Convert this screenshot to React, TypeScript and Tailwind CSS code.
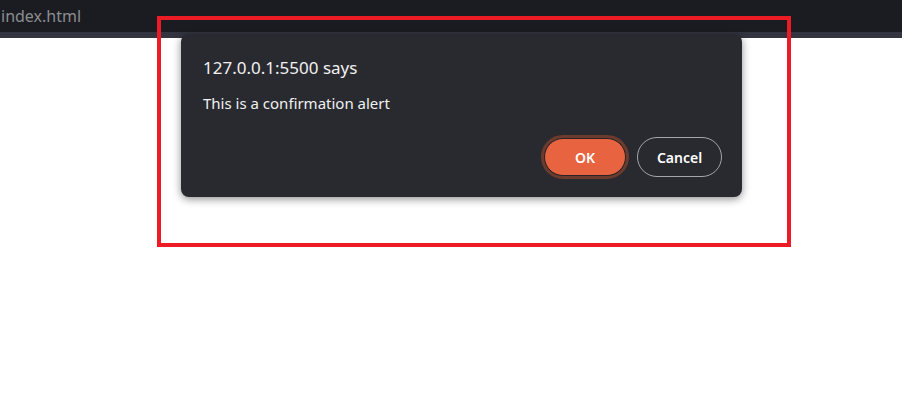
import React from "react";

export default function App() {
  return (
    <div
      className="relative w-[902px] h-[404px] bg-white overflow-hidden"
      style={{ fontFamily: '"Noto Sans", "Segoe UI", sans-serif' }}
    >
      <div className="h-[32px] bg-[#1b1c21] flex items-center">
        <span className="ml-[1px] text-[16px] text-[#8b8c90] leading-none pb-[1px]" style={{ fontFamily: '"Noto Sans", sans-serif' }}>
          index.html
        </span>
      </div>
      <div className="h-[6px] bg-[#32343f]" />

      {/* dialog */}
      <div className="absolute left-[181px] top-[34px] w-[561px] h-[163px] rounded-[8px] bg-[#292a2f] shadow-[0_2px_8px_rgba(0,0,0,0.45)] flex flex-col pl-[22px] pr-[20px] pt-[22px] pb-[20px]">
        <div className="text-[17px] leading-[24px] text-[#f1f1f1]">127.0.0.1:5500 says</div>
        <div className="mt-[12px] text-[15px] leading-[22px] text-[#f1f1f1]">This is a confirmation alert</div>
        <div className="mt-auto flex justify-end items-center gap-[11px]">
          <button className="h-[38px] w-[82px] rounded-full bg-[#e8633f] text-white text-[14px] font-semibold border border-[#2a2225] outline outline-[3px] outline-[#6b3b2e] outline-offset-0">
            OK
          </button>
          <button className="h-[40px] w-[85px] rounded-full bg-transparent text-white text-[14px] font-semibold border border-[#a5a6aa]">
            Cancel
          </button>
        </div>
      </div>

      {/* red annotation box */}
      <div className="absolute left-[157px] top-[16px] w-[634px] h-[231px] border-[4px] border-[#ed1c24] pointer-events-none" />
    </div>
  );
}
